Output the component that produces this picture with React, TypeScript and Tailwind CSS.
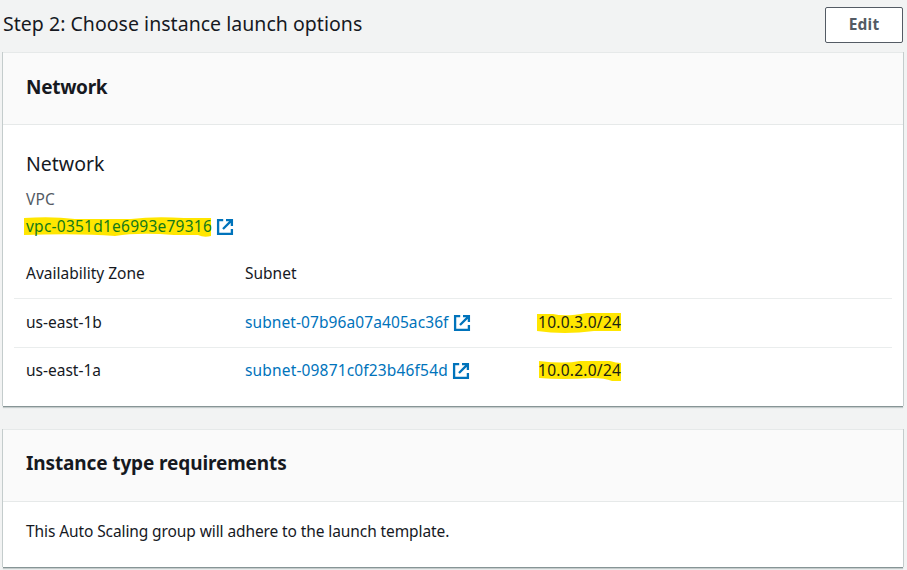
import type { ReactNode } from "react";

function ExternalIcon() {
  return (
    <svg width="16" height="16" viewBox="0 0 16 16" fill="none" stroke="#0073bb" strokeWidth="2.3" className="shrink-0 overflow-visible">
      <path d="M6.2 1.1H1.1V14.9H14.9V10" />
      <path d="M9 1.1H14.9V7M14.6 1.4L6 10" />
    </svg>
  );
}

function Card({ title, titleClass, className, children }: { title: string; titleClass: string; className: string; children: ReactNode }) {
  return (
    <section className={`ml-[3px] w-[900px] bg-white shadow-[0_1px_0_0_#879596,0_2px_1px_0_#c5cccc,-1px_0_0_0_#c5cccc,1px_0_0_0_#c5cccc] ${className}`}>
      <header className="flex h-[73px] items-center border-y border-[#e6e9e9] bg-[#fafafa] pl-[23px]">
        <h2 className={`text-[19px] leading-6 font-bold ${titleClass}`}>{title}</h2>
      </header>
      {children}
    </section>
  );
}

type RowProps = { zone: string; subnet: string; subnetClass: string; cidr: string; mark: string; className: string };

function Row({ zone, subnet, subnetClass, cidr, mark, className }: RowProps) {
  return (
    <div className={`flex items-center border-t border-[#eaeded] pl-3 ${className}`}>
      <span className="w-[219px]">{zone}</span>
      <span className="flex w-[293px] items-center text-[#0073bb]">
        <span className={subnetClass}>{subnet}</span>
        <span className="pt-[2px]"><ExternalIcon /></span>
      </span>
      <span className="relative isolate tracking-[0.26px] text-[#1b2414]">
        <svg width="86" height="22" viewBox="0 0 86 22" className="absolute -left-px top-[2px] -z-10">
          <path d={mark} fill="#ffe600" />
        </svg>
        {cidr}
      </span>
    </div>
  );
}

export default function App() {
  return (
    <main className="h-[570px] w-[907px] overflow-hidden bg-[#f2f3f3] font-['Noto_Sans',sans-serif] text-[15.5px] leading-[22px] text-[#16191f]">
      <div className="flex h-[52px] items-start justify-between pt-[7px] pr-[4px] pl-[3px]">
        <h1 className="mt-[3px] text-[19.5px] leading-7 tracking-[0.03px]">Step 2: Choose instance launch options</h1>
        <button className="h-9 w-[78px] rounded-[2px] border border-[#545b64] bg-white pb-[2px] text-[15.5px] font-bold tracking-[0.2px] text-[#545b64]">Edit</button>
      </div>
      <Card title="Network" titleClass="-mt-[4px] tracking-[-0.3px]" className="h-[354px]">
        <div className="px-[11px] pt-[27px]">
          <h3 className="pl-3 text-[19.5px] leading-6">Network</h3>
          <div className="mt-[12px] pl-3 tracking-[0.2px] text-[#545b64]">VPC</div>
          <div className="mt-[5px] flex items-center pl-3">
            <span className="relative isolate w-[191px] tracking-[0.24px] text-[#14791a]">
              <svg width="190" height="22" viewBox="0 0 190 22" className="absolute -left-[2px] top-[2px] -z-10">
                <path d="M0 1Q28-1 51 2H107Q130-1 160 1H187V19Q180 21 174 18H150Q115 15 91 19Q55 16 0 18Z" fill="#ffe600" />
              </svg>
              vpc-0351d1e6993e79316
            </span>
            <span className="pt-px"><ExternalIcon /></span>
          </div>
          <div className="mt-[25px] flex h-[36px] pl-3">
            <span className="w-[219px]">Availability Zone</span>
            <span>Subnet</span>
          </div>
          <Row className="h-[49px] pb-[2px]" zone="us-east-1b" subnet="subnet-07b96a07a405ac36f" subnetClass="w-[209px] tracking-[0.09px]" cidr="10.0.3.0/24" mark="M0 1H16Q28 4 50 0H84V18H57Q27 22 0 18Z" />
          <Row className="h-[46px] pb-px" zone="us-east-1a" subnet="subnet-09871c0f23b46f54d" subnetClass="w-[208px] tracking-[0.16px]" cidr="10.0.2.0/24" mark="M2 0Q27 3 43 0H73Q79 2 84 2V20H75Q68 17 55 17Q25 19 2 17Z" />
        </div>
      </Card>
      <Card title="Instance type requirements" titleClass="-mt-[6px] tracking-[-0.12px]" className="mt-[23px] h-[138px]">
        <p className="pt-[18px] pl-[23px] tracking-[-0.1px]">This Auto Scaling group will adhere to the launch template.</p>
      </Card>
    </main>
  );
}
